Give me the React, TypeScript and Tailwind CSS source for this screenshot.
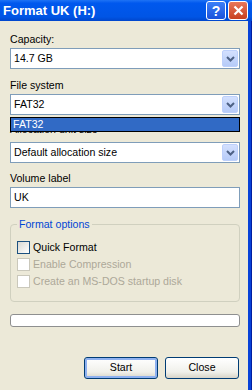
const font = { fontFamily: '"Liberation Sans", Arial, sans-serif' };

function Chevron() {
  return (
    <svg width="9" height="6" viewBox="0 0 9 6">
      <polyline points="1,1 4.5,4.5 8,1" fill="none" stroke="#4d6185" strokeWidth="2" />
    </svg>
  );
}

function Combo({ value }: { value: string }) {
  return (
    <div className="flex h-[21px] w-[230px] items-center border border-[#7f9db9] bg-white pl-[3px] pr-[1px]">
      <span className="flex-1 leading-none text-black">{value}</span>
      <div className="flex h-[17px] w-[16px] items-center justify-center rounded-[2px] border border-[#bdd0fb] bg-[linear-gradient(to_bottom,#d3e0fe,#b6cbf8)]">
        <Chevron />
      </div>
    </div>
  );
}

function Check({ label, disabled }: { label: string; disabled?: boolean }) {
  return (
    <div className="flex h-[13px] items-center gap-[3px]">
      <div
        className={
          disabled
            ? 'h-[13px] w-[13px] border border-[#cac8bb] bg-white'
            : 'h-[13px] w-[13px] border border-[#1c5180] bg-[linear-gradient(135deg,#d8d8d2,#ffffff)]'
        }
      />
      <span className={disabled ? 'text-[#aca899]' : 'text-black'}>{label}</span>
    </div>
  );
}

export default function App() {
  return (
    <div className="flex h-[390px] w-[252px] flex-col overflow-hidden bg-[#ece9d8]" style={font}>
      <div className="flex h-[21px] shrink-0 items-center bg-[linear-gradient(to_bottom,#1e73f5,#0058ee_15%,#0055e5_80%,#0046cc)] pl-[3px] pr-[4px]">
        <span className="flex-1 text-[13px] font-bold leading-none text-white">Format UK (H:)</span>
        <div className="flex h-[19px] w-[20px] items-center justify-center rounded-[3px] border border-white bg-[linear-gradient(to_bottom,#3b7ff8,#1b52db)] text-[14px] font-bold leading-none text-white">
          ?
        </div>
        <div className="ml-[2px] flex h-[19px] w-[20px] items-center justify-center rounded-[3px] border border-white bg-[linear-gradient(to_bottom,#e8775a,#c8401f)]">
          <svg width="11" height="11" viewBox="0 0 11 11">
            <path d="M1.5 1.5 L9.5 9.5 M9.5 1.5 L1.5 9.5" stroke="white" strokeWidth="2.2" />
          </svg>
        </div>
      </div>

      <div className="flex flex-1">
        <div className="relative flex flex-1 flex-col pl-[10px] text-[10.6px] text-black">
          <div className="mt-[12px] h-[13px] leading-[13px]">Capacity:</div>
          <div className="mt-[2px]">
            <Combo value="14.7 GB" />
          </div>

          <div className="mt-[10px] h-[13px] leading-[13px]">File system</div>
          <div className="mt-[2px]">
            <Combo value="FAT32" />
          </div>

          <div className="mt-[8px] h-[13px] leading-[13px]">Allocation unit size</div>
          <div className="mt-[6px]">
            <Combo value="Default allocation size" />
          </div>

          <div className="mt-[9px] h-[13px] leading-[13px]">Volume label</div>
          <div className="mt-[2px] flex h-[21px] w-[230px] items-center border border-[#7f9db9] bg-white pl-[3px]">
            UK
          </div>

          <div className="relative mt-[16px] h-[78px] w-[230px] rounded-[4px] border border-[#d0d0bf] pl-[6px] pt-[16px]">
            <span className="absolute -top-[7px] left-[6px] bg-[#ece9d8] px-[2px] leading-[13px] text-[#0046d5]">
              Format options
            </span>
            <div className="flex flex-col gap-[4px]">
              <Check label="Quick Format" />
              <Check label="Enable Compression" disabled />
              <Check label="Create an MS-DOS startup disk" disabled />
            </div>
          </div>

          <div className="mt-[12px] h-[13px] w-[230px] rounded-[3px] border border-[#8e8f8f] bg-white" />

          <div className="mt-[30px] flex w-[229px] justify-end gap-[7px]">
            <div className="flex h-[22px] w-[74px] items-center justify-center rounded-[3px] border border-[#003c74] bg-[linear-gradient(to_bottom,#ffffff,#f0f0ea_70%,#d8d4c8)] shadow-[inset_0_0_0_2px_#8eb1f0]">
              Start
            </div>
            <div className="flex h-[22px] w-[74px] items-center justify-center rounded-[3px] border border-[#003c74] bg-[linear-gradient(to_bottom,#ffffff,#f0f0ea_70%,#d8d4c8)]">
              Close
            </div>
          </div>

          <div className="absolute left-[10px] top-[96px] flex h-[15px] w-[230px] items-center border border-black bg-[#316ac5] pl-[2px] text-white">
            FAT32
          </div>
        </div>
        <div className="w-[4px] border-r border-[#001ea0] bg-[#0842d8]" />
      </div>
    </div>
  );
}
